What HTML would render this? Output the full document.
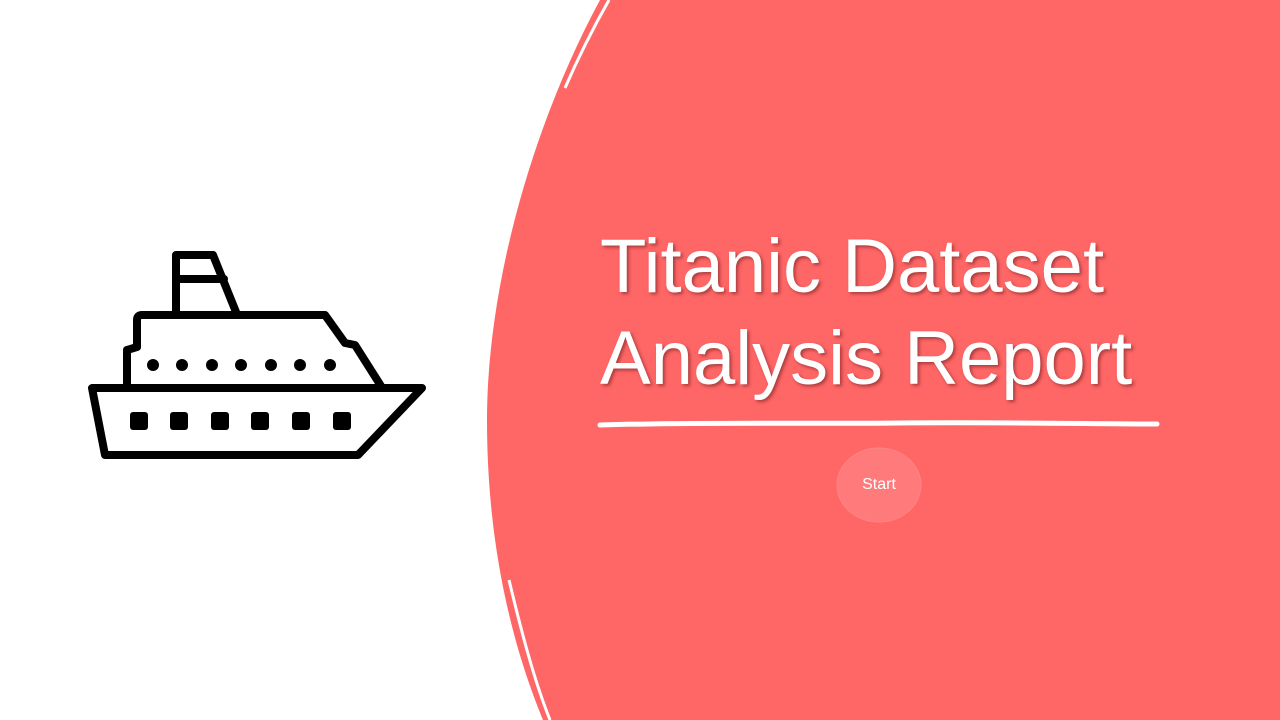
<!DOCTYPE html>
<html><head><meta charset="utf-8"><style>
html,body{margin:0;padding:0;width:1280px;height:720px;overflow:hidden;background:#fff;font-family:"Liberation Sans",sans-serif}
.t{position:absolute;left:600px;color:#fff;font-size:76px;line-height:1;white-space:nowrap;text-shadow:2px 2px 3px rgba(90,20,20,.5)}
</style></head><body>
<svg width="1280" height="720" style="position:absolute;left:0;top:0">
<path d="M600,0 C530,130 487,290 487,420 C487,540 510,640 543,720 L1280,720 L1280,0 Z" fill="#ff6666"/>
<path d="M609,0 C592,30 578,58 565,88" stroke="#fff" stroke-width="3" fill="none"/>
<path d="M509,580 C521,630 534,680 550,720" stroke="#fff" stroke-width="3" fill="none"/>
<path d="M600,425 C700,422 800,424 900,423 C1000,422 1100,424 1157,424" stroke="#fff" stroke-width="5" stroke-linecap="round" fill="none"/>
<ellipse cx="879" cy="485" rx="42" ry="37" fill="#ff7b7b" stroke="#ff8484" stroke-width="1"/>
<text x="879" y="489" fill="#fff" font-family="Liberation Sans,sans-serif" font-size="16" text-anchor="middle">Start</text>
<g fill="none" stroke="#000" stroke-width="8" stroke-linejoin="round" stroke-linecap="round">
<path d="M176,312 L176,255 L213,255 L236,312"/>
<path d="M176,279 L224,279"/>
<path d="M127,386 L127,350 L137,347 L137,320 Q137,315 142,315 L325,315 L345,343 L355,345 L381,386"/>
<path d="M92,388 L422,388 L358,455 L105,455 Z"/>
</g>
<g fill="#000">
<circle cx="153" cy="365" r="6"/><circle cx="182" cy="365" r="6"/><circle cx="212" cy="365" r="6"/><circle cx="241" cy="365" r="6"/><circle cx="271" cy="365" r="6"/><circle cx="300" cy="365" r="6"/><circle cx="330" cy="365" r="6"/>
<rect x="130" y="412" width="18" height="18" rx="3"/><rect x="170" y="412" width="18" height="18" rx="3"/><rect x="211" y="412" width="18" height="18" rx="3"/><rect x="251" y="412" width="18" height="18" rx="3"/><rect x="292" y="412" width="18" height="18" rx="3"/><rect x="333" y="412" width="18" height="18" rx="3"/>
</g>
</svg>
<div class="t" style="top:229px">Titanic Dataset</div>
<div class="t" style="top:321px">Analysis Report</div>
</body></html>
